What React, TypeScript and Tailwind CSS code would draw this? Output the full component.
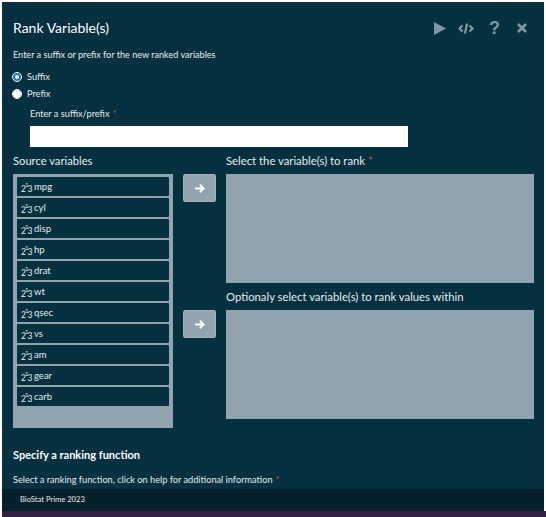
const variables = ["mpg", "cyl", "disp", "hp", "drat", "wt", "qsec", "vs", "am", "gear", "carb"];

function ArrowButton() {
  return (
    <button className="flex h-[28px] w-[33px] items-center justify-center rounded-[2px] border border-[#a3b3bb] bg-[#91a4ad] text-white">
      <svg width="11" height="11" viewBox="0 0 12 12" fill="none" stroke="currentColor" strokeWidth="2.2">
        <path d="M1 6h9M6.5 2l4 4-4 4" />
      </svg>
    </button>
  );
}

function Required() {
  return <span className="ml-[3px] text-[#d9472b]">*</span>;
}

function NumericIcon() {
  return (
    <span className="mr-[1px] flex h-[12px] w-[12px] shrink-0 items-end text-[8.5px] leading-[9px]">
      <span>2</span>
      <span className="-mx-[1px] self-start text-[6px] leading-[6px]">1</span>
      <span>3</span>
    </span>
  );
}

function HeaderIcons() {
  return (
    <div className="flex items-center text-[#7f98a3]">
      <svg className="mr-[12px]" width="12" height="13" viewBox="0 0 12 13" fill="currentColor">
        <path d="M0 0l12 6.5L0 13z" />
      </svg>
      <svg className="mr-[15px]" width="16" height="11" viewBox="0 0 16 11" fill="none" stroke="currentColor" strokeWidth="2.2">
        <path d="M4.5 2.5L1.5 5.5l3 3M11.5 2.5l3 3-3 3M9.1 0.5L6.9 10.5" />
      </svg>
      <span className="mr-[17px] font-['Liberation_Sans',sans-serif] text-[18px] leading-none font-bold">?</span>
      <svg width="10" height="10" viewBox="0 0 10 10" fill="none" stroke="currentColor" strokeWidth="2.8">
        <path d="M1 1l8 8M9 1l-8 8" />
      </svg>
    </div>
  );
}

export default function App() {
  return (
    <div className="h-[517px] w-[546px] overflow-hidden bg-white pt-[2px] pl-[2px] font-['Lato',sans-serif] text-[#e6ecef]">
      <div className="flex h-[509px] w-[542px] flex-col bg-[#04303f]">
        <div className="flex-1 overflow-hidden pl-[11px]">
          <div className="flex items-center justify-between pt-[15px] pr-[17px]">
            <h1 className="text-[14px] leading-[22px] text-white">Rank Variable(s)</h1>
            <HeaderIcons />
          </div>

          <p className="mt-[9px] text-[9.1px] leading-[14px]">Enter a suffix or prefix for the new ranked variables</p>

          <div className="mt-[8px] flex flex-col gap-[3px] text-[9.2px] leading-[14px]">
            <label className="flex items-center gap-[5px]">
              <span className="h-[8px] w-[8px] rounded-full border-[2px] border-[#1a73e8] bg-white outline outline-[1px] outline-white" />
              <span className="ml-[1px]">Suffix</span>
            </label>
            <label className="flex items-center gap-[5px]">
              <span className="h-[8px] w-[8px] rounded-full bg-white outline outline-[1px] outline-white" />
              <span className="ml-[1px]">Prefix</span>
            </label>
          </div>

          <div className="mt-[6px] pl-[17px]">
            <label className="block text-[9.2px] leading-[14px]">
              Enter a suffix/prefix
              <Required />
            </label>
            <div className="mt-[5px] h-[21px] w-[378px] bg-white" />
          </div>

          <div className="mt-[5px] flex gap-[10px]">
            <div className="w-[160px]">
              <div className="text-[11.2px] leading-[18px]">Source variables</div>
              <div className="mt-[4px] flex h-[254px] flex-col gap-[2px] bg-[#91a4ad] px-[4px] py-[3px]">
                {variables.map((name) => (
                  <div key={name} className="flex h-[19px] items-center rounded-[1px] bg-[#04303f] pt-[2px] pl-[4px] text-[9.5px]">
                    <NumericIcon />
                    {name}
                  </div>
                ))}
              </div>
            </div>

            <div className="mt-[22px] flex w-[33px] flex-col gap-[108px]">
              <ArrowButton />
              <ArrowButton />
            </div>

            <div className="w-[308px]">
              <div className="text-[11.3px] leading-[18px]">
                Select the variable(s) to rank
                <Required />
              </div>
              <div className="mt-[4px] h-[109px] bg-[#91a4ad]" />
              <div className="mt-[5px] text-[11.3px] leading-[18px]">Optionaly select variable(s) to rank values within</div>
              <div className="mt-[4px] h-[109px] bg-[#91a4ad]" />
            </div>
          </div>

          <h2 className="mt-[20px] text-[11px] leading-[14px] font-bold text-white">Specify a ranking function</h2>
          <p className="mt-[11px] text-[9.2px] leading-[14px]">
            Select a ranking function, click on help for additional information
            <Required />
          </p>
        </div>
        <div className="flex h-[22px] items-center bg-[#051f2b] pl-[18px] text-[7.6px]">BioStat Prime 2023</div>
      </div>
      <div className="h-[6px] bg-[#33223f]" />
    </div>
  );
}
